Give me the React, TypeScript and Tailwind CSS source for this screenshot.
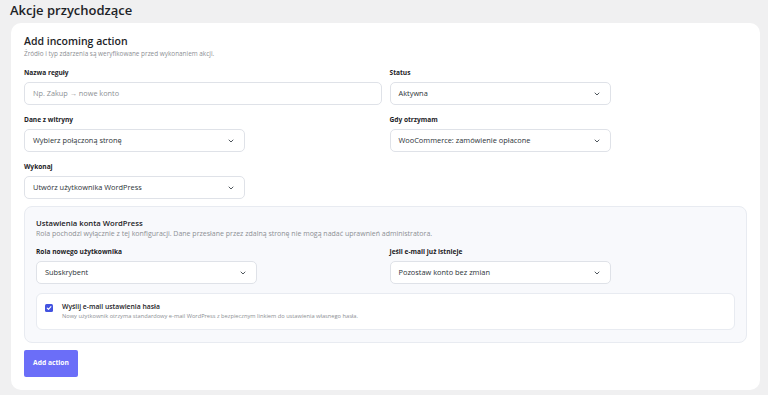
import React from 'react';
import { ChevronDown } from 'lucide-react';

const font = { fontFamily: '"Open Sans", "Noto Sans", "Liberation Sans", sans-serif' };

function Label({ children }: { children: React.ReactNode }) {
  return <div className="text-[6.6px] leading-[10px] font-bold text-[#1d2327] mb-[4px]">{children}</div>;
}

function Select({ value, wide }: { value: string; wide?: boolean }) {
  return (
    <div
      className={
        'h-[23px] bg-white border border-[#dfe2e8] rounded-[5px] flex items-center justify-between pl-[8px] pr-[9px] ' +
        (wide ? 'w-full' : 'w-[221px]')
      }
    >
      <span className="text-[7.4px] text-[#2c3338]">{value}</span>
      <ChevronDown size={8} strokeWidth={3} className="text-[#50575e]" />
    </div>
  );
}

export default function App() {
  return (
    <div className="min-h-screen bg-[#f0f0f1] pl-[11px] pr-[8px] pb-[6px]" style={font}>
      <h1 className="-ml-px text-[13px] leading-[21px] font-semibold text-[#1d2327]">Akcje przychodzące</h1>

      <div className="mt-[2px] bg-white rounded-[10px] px-[13px] pt-[10px] pb-[13px]">
        <h2 className="text-[10.5px] leading-[16px] font-semibold text-[#1d2327]">Add incoming action</h2>
        <p className="text-[6.4px] leading-[10px] text-[#8c8f94]">
          Źródło i typ zdarzenia są weryfikowane przed wykonaniem akcji.
        </p>

        <div className="mt-[9px] grid grid-cols-2 gap-x-[8px] gap-y-[10px]">
          <div>
            <Label>Nazwa reguły</Label>
            <div className="h-[23px] bg-white border border-[#dfe2e8] rounded-[5px] flex items-center pl-[8px]">
              <span className="text-[7.3px] text-[#8c8f94]">Np. Zakup → nowe konto</span>
            </div>
          </div>
          <div>
            <Label>Status</Label>
            <Select value="Aktywna" />
          </div>
          <div>
            <Label>Dane z witryny</Label>
            <Select value="Wybierz połączoną stronę" />
          </div>
          <div>
            <Label>Gdy otrzymam</Label>
            <Select value="WooCommerce: zamówienie opłacone" />
          </div>
          <div>
            <Label>Wykonaj</Label>
            <Select value="Utwórz użytkownika WordPress" />
          </div>
        </div>

        {/* WordPress account settings */}
        <div className="mt-[7px] bg-[#f8f9fc] border border-[#e8ebf1] rounded-[8px] px-[11px] pt-[10px] pb-[12px]">
          <h3 className="text-[7.7px] leading-[12px] font-semibold text-[#1d2327]">Ustawienia konta WordPress</h3>
          <p className="text-[7px] leading-[10px] text-[#8c8f94]">
            Rola pochodzi wyłącznie z tej konfiguracji. Dane przesłane przez zdalną stronę nie mogą nadać uprawnień administratora.
          </p>

          <div className="mt-[8px] grid grid-cols-2 gap-x-[8px]">
            <div>
              <Label>Rola nowego użytkownika</Label>
              <Select value="Subskrybent" />
            </div>
            <div>
              <Label>Jeśli e-mail już istnieje</Label>
              <Select value="Pozostaw konto bez zmian" />
            </div>
          </div>

          <div className="mt-[9px] bg-white border border-[#e8ebf1] rounded-[6px] pl-[8px] pt-[7px] pb-[8px] flex items-start gap-[9px]">
            <span className="mt-[3px] w-[8px] h-[8px] rounded-[1.5px] bg-[#4353e0] flex items-center justify-center shrink-0">
              <svg width="6" height="6" viewBox="0 0 10 10" fill="none">
                <path d="M2 5.2 L4.2 7.4 L8.2 2.6" stroke="white" strokeWidth="1.8" strokeLinecap="round" strokeLinejoin="round" />
              </svg>
            </span>
            <div>
              <div className="text-[6.8px] leading-[11px] font-semibold text-[#1d2327]">Wyślij e-mail ustawienia hasła</div>
              <div className="text-[5.7px] leading-[9px] text-[#8c8f94]">
                Nowy użytkownik otrzyma standardowy e-mail WordPress z bezpiecznym linkiem do ustawienia własnego hasła.
              </div>
            </div>
          </div>
        </div>

        <button className="mt-[7px] w-[54px] h-[27px] bg-[#6b6ef8] rounded-[2px] text-white text-[6.7px] font-bold flex items-center justify-center">
          Add action
        </button>
      </div>
    </div>
  );
}
